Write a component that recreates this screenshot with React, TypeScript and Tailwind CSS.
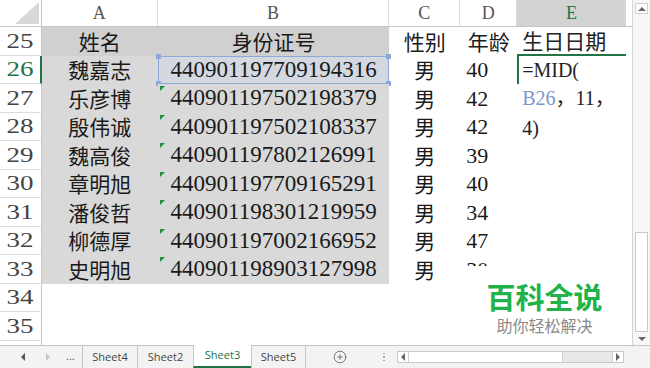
import { CirclePlus } from "lucide-react";

type Row = { n: number; a?: string; b?: string; c?: string; d?: string };

const rows: Row[] = [
  { n: 25, a: "姓名", b: "身份证号", c: "性别", d: "年龄" },
  { n: 26, a: "魏嘉志", b: "440901197709194316", c: "男", d: "40" },
  { n: 27, a: "乐彦博", b: "440901197502198379", c: "男", d: "42" },
  { n: 28, a: "殷伟诚", b: "440901197502108337", c: "男", d: "42" },
  { n: 29, a: "魏高俊", b: "440901197802126991", c: "男", d: "39" },
  { n: 30, a: "章明旭", b: "440901197709165291", c: "男", d: "40" },
  { n: 31, a: "潘俊哲", b: "440901198301219959", c: "男", d: "34" },
  { n: 32, a: "柳德厚", b: "440901197002166952", c: "男", d: "47" },
  { n: 33, a: "史明旭", b: "440901198903127998", c: "男", d: "30" },
  { n: 34 },
  { n: 35 },
  { n: 36 },
];

const cjk = "font-['Noto_Sans_CJK_SC',sans-serif]";
const serif = "font-['Liberation_Serif','Noto_Sans_CJK_SC',serif]";

const Tri = ({ dir, color = "#555" }: { dir: "l" | "r" | "u" | "d"; color?: string }) => {
  const pts = {
    l: "4,0 4,8 0,4",
    r: "0,0 0,8 4,4",
    u: "0,4 8,4 4,0",
    d: "0,0 8,0 4,4",
  }[dir];
  const w = dir === "l" || dir === "r" ? 4 : 8;
  const h = dir === "l" || dir === "r" ? 8 : 4;
  return (
    <svg width={w} height={h} viewBox={`0 0 ${w} ${h}`}>
      <polygon points={pts} fill={color} />
    </svg>
  );
};

function ECell({ n }: { n: number }) {
  if (n === 25)
    return (
      <div className={`w-[109px] h-full border-b-2 border-[#217346] pl-[5px] flex items-center text-[21px] text-[#222] ${cjk}`}>
        生日日期
      </div>
    );
  if (n === 26)
    return (
      <div className={`w-[109px] h-full border-l-2 border-[#217346] pl-[3px] flex items-center text-[20px] text-[#222] ${serif}`}>
        =MID(
      </div>
    );
  if (n === 27)
    return (
      <div className={`w-[109px] h-full pl-[5px] flex items-center text-[20px] text-[#222] ${serif}`}>
        <span className="text-[#7a98cc]">B26</span>
        <span>，11，</span>
      </div>
    );
  if (n === 28)
    return (
      <div className={`w-[109px] h-full pl-[5px] flex items-start text-[20px] text-[#222] ${serif}`}>
        4)
      </div>
    );
  return <div className="w-[109px] h-full" />;
}

function DataRow({ r }: { r: Row }) {
  const filled = r.n <= 33;
  const head = r.n === 25;
  const active = r.n === 26;
  const abBg = head ? "bg-[#d0d0d0]" : filled ? "bg-[#d9d9d9]" : "";
  return (
    <div className="flex h-[28.5px] shrink-0">
      <div
        className={`w-[42px] h-full flex items-center justify-center border-b border-[#dcdcdc] ${
          active ? "border-r-2 border-r-[#217346] text-[#217346]" : "border-r border-r-[#c6c6c6] text-[#444]"
        } ${serif} text-[20px]`}
      >
        <span className="inline-block scale-x-[1.35]">{r.n}</span>
      </div>
      <div className={`w-[116px] h-full flex items-center justify-center text-[21px] text-[#1a1a1a] ${cjk} ${abBg}`}>
        {r.a}
      </div>
      <div
        className={`relative w-[232px] h-full flex items-center justify-center text-[#1a1a1a] ${
          head ? `${cjk} text-[21px]` : `${serif} text-[23px]`
        } ${active ? "bg-[#d3d8e1] border-[1.5px] border-[#8ea9d8]" : abBg}`}
      >
        {r.b}
        {active && (
          <>
            <span className="absolute -left-[3px] -top-[3px] w-[5px] h-[5px] bg-[#8ea9d8]" />
            <span className="absolute -left-[3px] -bottom-[3px] w-[5px] h-[5px] bg-[#8ea9d8]" />
            <span className="absolute -right-[3px] -top-[3px] w-[5px] h-[5px] bg-[#8ea9d8]" />
            <span className="absolute -right-[3px] -bottom-[3px] w-[5px] h-[5px] bg-[#8ea9d8]" />
          </>
        )}
        {filled && !head && !active && (
          <span className="absolute left-[2px] top-[2px] w-0 h-0 border-t-[5px] border-r-[5px] border-t-[#1f8f3f] border-r-transparent" />
        )}
      </div>
      <div className={`w-[71px] h-full flex items-center justify-center text-[21px] text-[#1a1a1a] ${cjk}`}>{r.c}</div>
      <div
        className={`w-[57px] h-full flex items-center text-[#1a1a1a] ${
          head ? `${cjk} text-[21px] justify-center` : `${serif} text-[22px] pl-[6px]`
        }`}
      >
        {r.d}
      </div>
      <ECell n={r.n} />
      <div className="w-[6px] h-full" />
    </div>
  );
}

export default function App() {
  const cols = [
    { l: "A", w: "w-[116px]" },
    { l: "B", w: "w-[232px]" },
    { l: "C", w: "w-[71px]" },
    { l: "D", w: "w-[57px]" },
  ];
  return (
    <div className="relative w-[650px] h-[368px] overflow-hidden bg-white">
      <div className="flex h-[345px]">
        {/* grid */}
        <div className="w-[633px] h-full flex flex-col overflow-hidden border-r border-[#d4d4d4]">
          <div className="flex h-[27px] shrink-0 border-b border-[#c6c6c6]">
            <div className="w-[42px] h-full border-r border-[#c6c6c6] flex items-end justify-end pr-[2px] pb-[2px]">
              <svg width="24" height="22" viewBox="0 0 24 22">
                <polygon points="24,0 24,22 0,22" fill="#d8d8d8" />
              </svg>
            </div>
            {cols.map((c) => (
              <div
                key={c.l}
                className={`${c.w} h-full border-r border-[#dedede] flex items-center justify-center text-[18px] text-[#555] ${serif}`}
              >
                {c.l}
              </div>
            ))}
            <div className={`w-[109px] h-full bg-[#d3d3d3] flex items-center justify-center text-[18px] text-[#217346] ${serif}`}>
              E
            </div>
            <div className="w-[6px] h-full" />
          </div>
          {rows.map((r) => (
            <DataRow key={r.n} r={r} />
          ))}
        </div>
        {/* vertical scrollbar */}
        <div className="w-[17px] h-full bg-[#f7f7f7] flex flex-col items-center">
          <div className="mt-[3px] w-[13px] h-[11px] bg-white border border-[#d0d0d0] flex items-center justify-center">
            <Tri dir="u" color="#666" />
          </div>
          <div className="h-[218px]" />
          <div className="w-[13px] h-[100px] bg-white border border-[#c8c8c8]" />
          <div className="mt-[2px] w-[13px] h-[10px] flex items-center justify-center">
            <Tri dir="d" color="#666" />
          </div>
        </div>
      </div>

      {/* sheet tabs */}
      <div className="h-[23px] bg-[#f3f3f3] border-t border-[#c6c6c6] flex items-stretch font-['Open_Sans',sans-serif] text-[11px] text-[#444]">
        <div className="w-[82px] flex items-center">
          <span className="ml-[21px]">
            <Tri dir="l" color="#555" />
          </span>
          <span className="ml-[21px]">
            <Tri dir="r" color="#c4c4c4" />
          </span>
          <span className="ml-[16px] text-[#555] leading-none pb-[3px]">...</span>
        </div>
        <div className="w-[55px] border-l border-[#c6c6c6] flex items-center justify-center">Sheet4</div>
        <div className="w-[56px] border-l border-[#c6c6c6] flex items-center justify-center">Sheet2</div>
        <div className="w-[58px] border-l border-[#c6c6c6] bg-white flex items-center justify-center text-[#217346] border-b-2 border-b-[#217346] -mt-px">
          Sheet3
        </div>
        <div className="w-[55px] border-l border-r border-[#c6c6c6] flex items-center justify-center">Sheet5</div>
        <div className="ml-[27px] flex items-center">
          <CirclePlus size={14} strokeWidth={1.5} color="#666" />
        </div>
        <div className="ml-[36px] flex flex-col justify-center gap-[2px]">
          <span className="w-[1.5px] h-[1.5px] bg-[#aaa]" />
          <span className="w-[1.5px] h-[1.5px] bg-[#aaa]" />
          <span className="w-[1.5px] h-[1.5px] bg-[#aaa]" />
        </div>
        <div className="ml-[12px] my-[5px] w-[227px] border border-[#c8c8c8] bg-[#e8e8e8] flex items-stretch">
          <div className="w-[11px] bg-white border-r border-[#d0d0d0] flex items-center justify-center">
            <Tri dir="l" color="#666" />
          </div>
          <div className="w-[154px] bg-white border-r border-[#d0d0d0]" />
          <div className="flex-1" />
          <div className="w-[11px] bg-white border-l border-[#d0d0d0] flex items-center justify-center">
            <Tri dir="r" color="#666" />
          </div>
        </div>
      </div>

      {/* watermark */}
      <div className={`absolute left-[462px] top-[266px] w-[165px] h-[79px] bg-white flex flex-col items-center ${cjk}`}>
        <div className="mt-[15px] h-[30px] text-[29px] font-bold leading-[30px] text-[#22b24a]">百科全说</div>
        <div className="mt-[5px] h-[18px] text-[16px] leading-[18px] text-[#8a8a8a]">助你轻松解决</div>
      </div>
    </div>
  );
}
